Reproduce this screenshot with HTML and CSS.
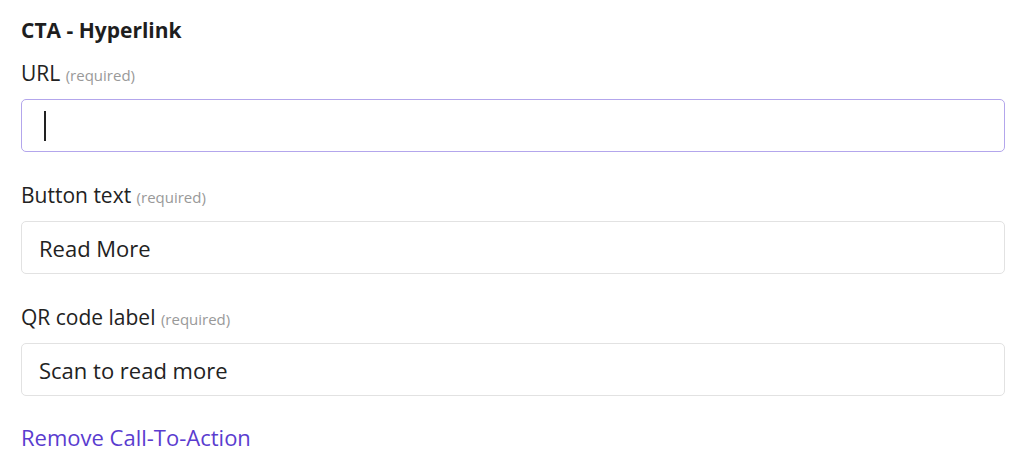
FILE: index.html
```html
<!DOCTYPE html>
<html>
<head>
<meta charset="utf-8">
<link rel="stylesheet" href="styles.css">
</head>
<body>
<div class="form">
  <h2 class="title">CTA - Hyperlink</h2>
  <div class="field">
    <label class="label">URL <span class="req">(required)</span></label>
    <div class="input focused"><span class="caret"></span></div>
  </div>
  <div class="field">
    <label class="label">Button text <span class="req">(required)</span></label>
    <div class="input">Read More</div>
  </div>
  <div class="field">
    <label class="label">QR code label <span class="req">(required)</span></label>
    <div class="input">Scan to read more</div>
  </div>
  <a class="remove" href="#">Remove Call-To-Action</a>
</div>
</body>
</html>
```

FILE: styles.css
```css
html, body {
  margin: 0;
  padding: 0;
  background: #ffffff;
}
body {
  font-family: "Open Sans", "Noto Sans", sans-serif;
  color: #222222;
}
.form {
  padding: 14px 19px 0 21px;
  display: flex;
  flex-direction: column;
}
.title {
  margin: 0 0 12px 0;
  font-size: 21px;
  font-weight: 700;
  line-height: 32px;
  color: #1e1e1e;
}
.field {
  display: flex;
  flex-direction: column;
  margin-bottom: 28px;
}
.label {
  font-size: 21px;
  line-height: 30px;
  height: 30px;
  margin-bottom: 11px;
  color: #222222;
}
.req {
  font-size: 15px;
  line-height: 1;
  color: #999999;
}
.input {
  box-sizing: border-box;
  height: 53px;
  border: 1px solid #e2e2e2;
  border-radius: 5px;
  padding: 0 17px;
  display: flex;
  align-items: center;
  font-size: 22px;
  color: #222222;
}
.input.focused {
  border-color: #b3a6ec;
}
.caret {
  display: block;
  width: 2px;
  height: 30px;
  background: #222222;
  margin-left: 5px;
}
.remove {
  font-size: 22px;
  line-height: 26px;
  color: #5a3ccf;
  text-decoration: none;
  align-self: flex-start;
}
```
